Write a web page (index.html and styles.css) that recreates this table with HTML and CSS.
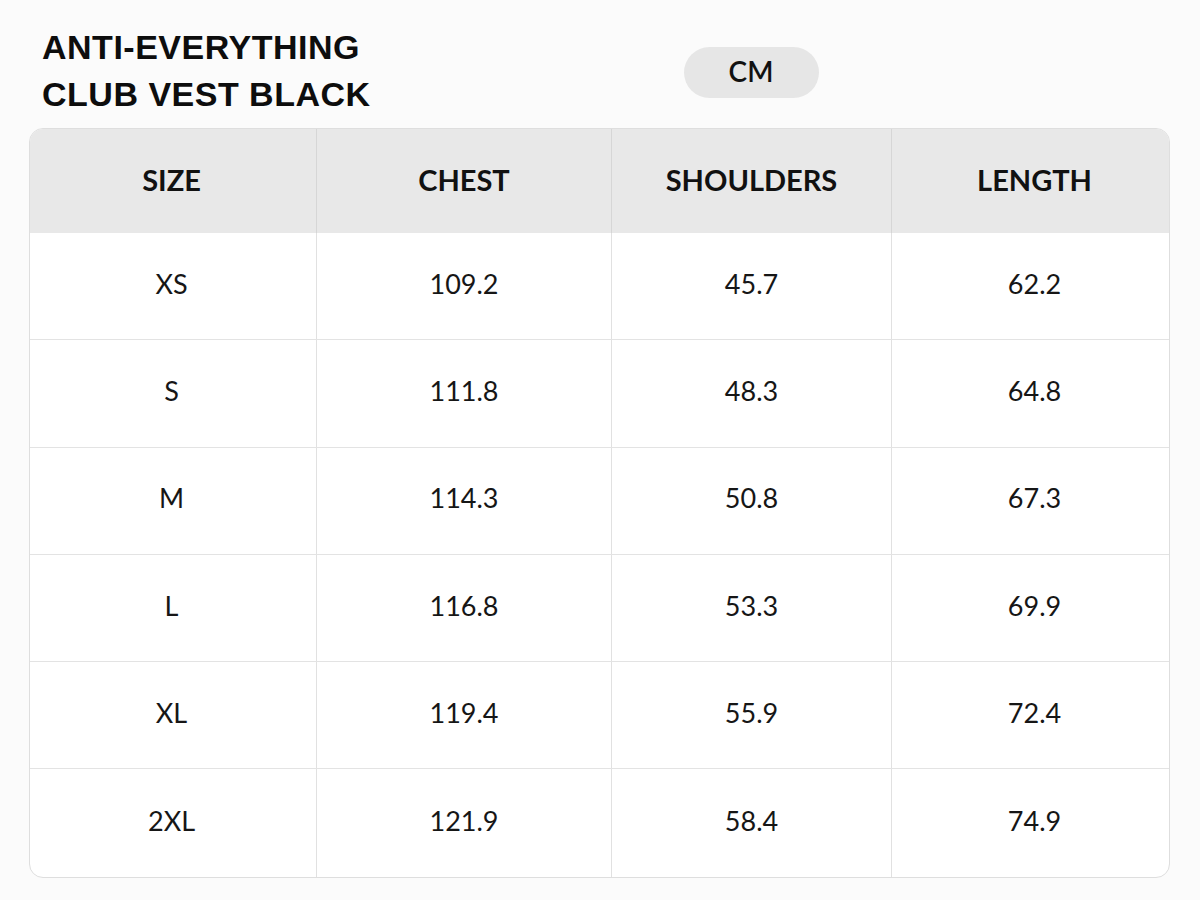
FILE: index.html
```html
<!DOCTYPE html>
<html lang="en">
<head>
<meta charset="utf-8">
<title>Size chart</title>
<link rel="stylesheet" href="styles.css">
</head>
<body>
<main class="page">
  <header class="top">
    <h1 class="title">ANTI-EVERYTHING<br>CLUB VEST BLACK</h1>
    <div class="unit-pill">CM</div>
  </header>
  <section class="chart">
    <div class="row head">
      <div class="cell">SIZE</div>
      <div class="cell">CHEST</div>
      <div class="cell">SHOULDERS</div>
      <div class="cell">LENGTH</div>
    </div>
    <div class="row"><div class="cell">XS</div><div class="cell">109.2</div><div class="cell">45.7</div><div class="cell">62.2</div></div>
    <div class="row"><div class="cell">S</div><div class="cell">111.8</div><div class="cell">48.3</div><div class="cell">64.8</div></div>
    <div class="row"><div class="cell">M</div><div class="cell">114.3</div><div class="cell">50.8</div><div class="cell">67.3</div></div>
    <div class="row"><div class="cell">L</div><div class="cell">116.8</div><div class="cell">53.3</div><div class="cell">69.9</div></div>
    <div class="row"><div class="cell">XL</div><div class="cell">119.4</div><div class="cell">55.9</div><div class="cell">72.4</div></div>
    <div class="row last"><div class="cell">2XL</div><div class="cell">121.9</div><div class="cell">58.4</div><div class="cell">74.9</div></div>
  </section>
</main>
</body>
</html>
```

FILE: styles.css
```css
* { box-sizing: border-box; }
html, body { margin: 0; padding: 0; }
body {
  background: #fbfbfb;
  color: #111;
  font-family: Lato, "Noto Sans", sans-serif;
  width: 1200px;
  height: 900px;
  overflow: hidden;
}
.page {
  padding: 24px 30px 0 29px;
}
.top {
  display: grid;
  grid-template-columns: 287px 295px 280px 1fr;
  align-items: start;
  height: 104px;
}
.title {
  grid-column: 1 / 3;
  margin: 0;
  padding-left: 13px;
  font-family: "Liberation Sans", Arial, sans-serif;
  font-weight: 700;
  font-size: 34px;
  letter-spacing: 0.5px;
  line-height: 47px;
  color: #0d0d0d;
}
.unit-pill {
  grid-column: 3;
  justify-self: center;
  margin-top: 23px;
  width: 135px;
  height: 51px;
  border-radius: 26px;
  background: #e6e6e6;
  display: flex;
  align-items: center;
  justify-content: center;
  padding-bottom: 3px;
  font-size: 28px;
  font-weight: 600;
  color: #111;
}
.chart {
  border: 1.5px solid #dedede;
  border-radius: 14px;
  overflow: hidden;
  background: #fff;
}
.row {
  display: grid;
  grid-template-columns: 287px 295px 280px 1fr;
  height: 107.3px;
  border-bottom: 1.5px solid #e3e3e3;
}
.row.last { border-bottom: none; }
.row.head {
  height: 104px;
  background: #e8e8e8;
  border-bottom: none;
}
.cell {
  display: flex;
  align-items: center;
  justify-content: center;
  border-right: 1.5px solid #e1e1e1;
  padding-bottom: 6px;
  font-size: 27px;
  font-weight: 400;
  color: #161616;
}
.cell:first-child { padding-right: 3px; }
.cell:last-child { border-right: none; padding-left: 8px; }
.head .cell {
  font-weight: 700;
  font-size: 29px;
  padding-bottom: 4px;
  color: #111;
  border-right-color: #d6d6d6;
}
```
